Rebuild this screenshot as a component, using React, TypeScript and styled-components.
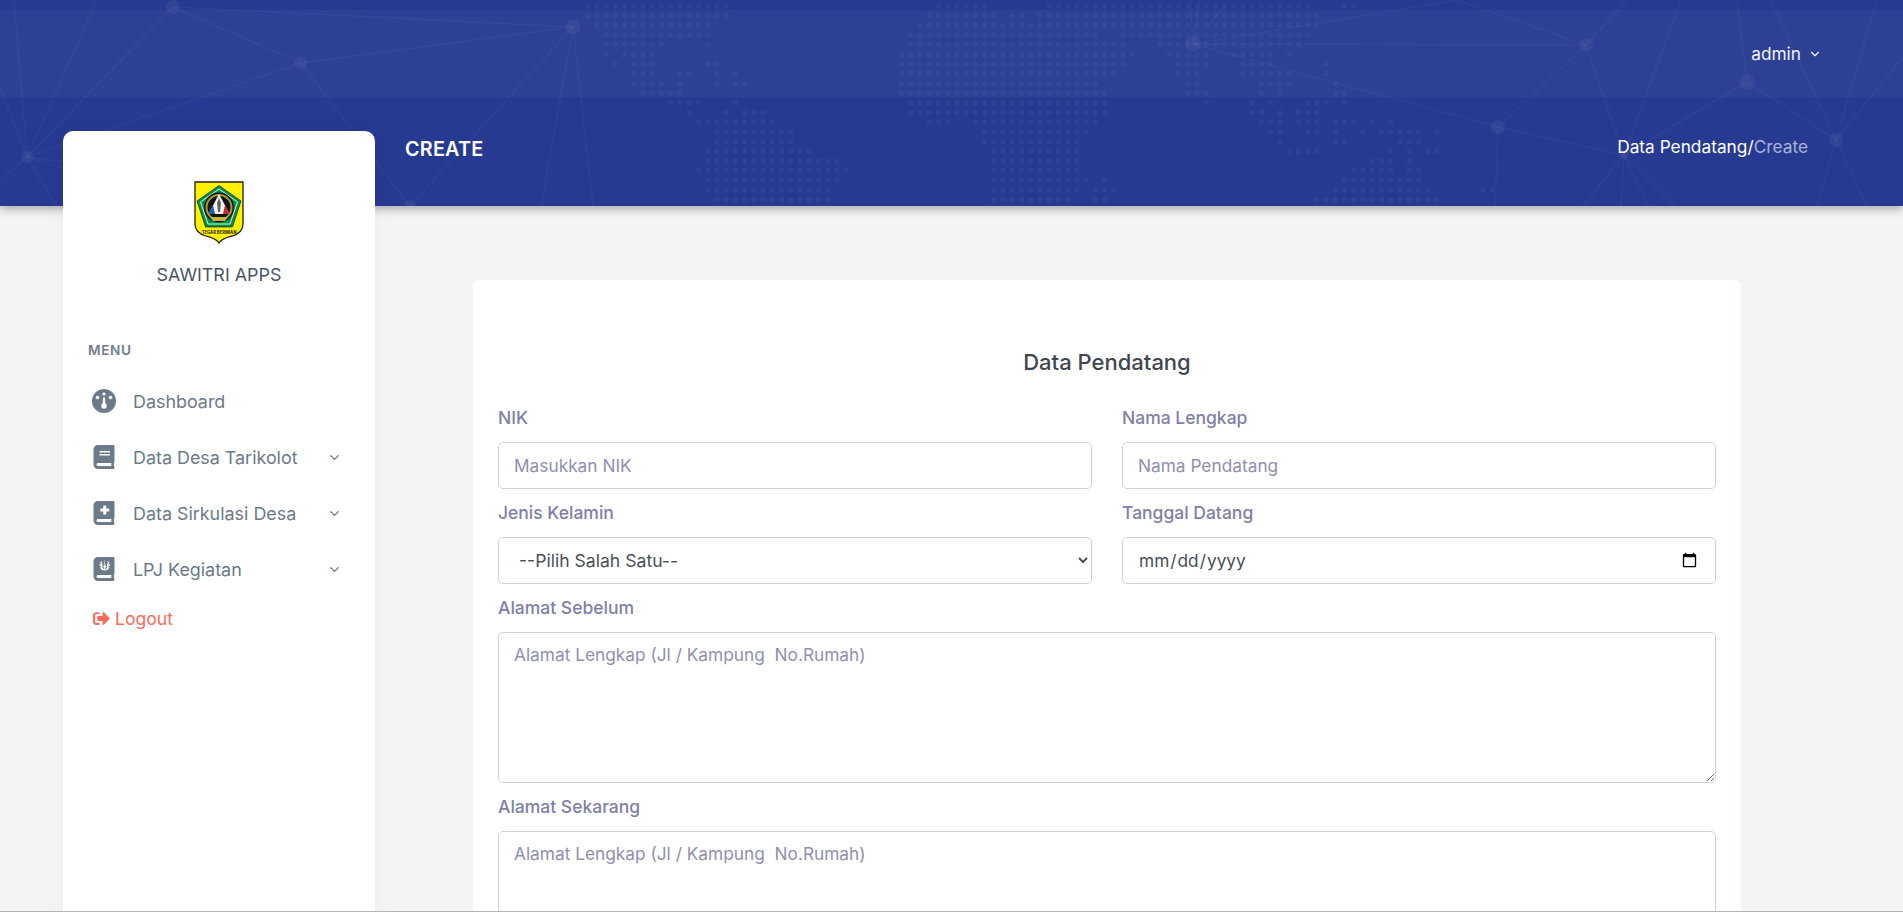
import React from "react";
import styled, { createGlobalStyle } from "styled-components";
import { FaBook, FaBookMedical, FaJournalWhills, FaSignOutAlt } from "react-icons/fa";
import { ChevronDown } from "lucide-react";

const Global = createGlobalStyle`
  html, body { margin: 0; padding: 0; height: 100%; overflow: hidden; }
  body { background: #f3f4f6; font-family: Inter, "Liberation Sans", sans-serif; }
  * { box-sizing: border-box; }
`;

const DOT_ROWS: string[] = [
  "0-15,38-43,50-78,82-83",
  "0-15,37-44,46-47,49-79",
  "1-13,36-79",
  "2-13,35-55,58-78",
  "2-8,13,35-58,62-77",
  "2,4-7,34-59,63-67,70-74,76",
  "3,5-7,13-14,34-58,64-67,71-74,80",
  "5-7,10-11,14,16,34-57,64-66,71-76,80",
  "5-8,10,14,16-17,34-55,65-66,73-76,81",
  "6-10,34-56,65-67,73,75,81-82",
  "9-12,16,35-56,67,72,74,78-80,82",
  "11,15,17-19,35-56,72-73,75,77-79",
  "12-20,37-39,42-55,73-75,77-79,81-83,85,87",
  "14-22,43-54,74-75,78-79,81,84,86-90,92",
  "14-22,43-53,75,81-82,88-90",
  "13-24,44-53,76-79,87,89,91-92",
  "13-27,44-53,85-87,89",
  "12-28,44-53,83-87,89-90",
  "13-27,44-54,56,82-90",
  "13-26,44-53,55-57,81-91,97-98",
  "14-26,44-52,55-56,79-92",
];

const dots: [number, number][] = [];
DOT_ROWS.forEach((row, r) => {
  row.split(",").forEach((part) => {
    const [a, b] = part.split("-").map(Number);
    for (let c = a; c <= (b ?? a); c++) dots.push([587.67 + c * 9.23, 6 + r * 9.68]);
  });
});

const LINES: [number, number, number, number][] = [
  [173, 7, 573, 27], [173, 7, 301, 63], [301, 63, 573, 27], [173, 7, 27, 157], [27, 157, 301, 63],
  [97, 0, 27, 157], [14, 0, 27, 157], [0, 87, 27, 157], [0, 180, 27, 157], [56, 206, 27, 157],
  [27, 157, 70, 163], [27, 157, 70, 170], [301, 63, 410, 206], [573, 27, 410, 206], [573, 27, 593, 206],
  [573, 27, 541, 206], [1190, 0, 1193, 44], [1200, 0, 1193, 44], [1230, 0, 1193, 44],
  [1193, 44, 1457, 0], [1193, 44, 1586, 45], [1193, 44, 1498, 127], [1457, 0, 1586, 45],
  [1627, 0, 1586, 45], [1586, 45, 1498, 127], [1586, 45, 1624, 155], [1498, 127, 1624, 155],
  [1498, 127, 1495, 206], [1624, 155, 1583, 206], [1624, 155, 1621, 206], [1624, 155, 1648, 206],
  [1624, 155, 1675, 206], [1624, 155, 1681, 0], [1624, 155, 1747, 82], [1747, 82, 1836, 140],
  [1737, 0, 1747, 82], [1836, 140, 1771, 0], [1836, 140, 1877, 0], [1836, 140, 1903, 57],
  [1836, 140, 1817, 206], [1836, 140, 1867, 206],
];

const NODES: [number, number, number][] = [
  [173, 7, 7], [301, 63, 6.5], [573, 27, 7.5], [27, 157, 6], [410, 206, 6], [1193, 44, 8],
  [1586, 45, 7], [1498, 127, 7], [1624, 155, 5], [1747, 82, 7.5], [1836, 140, 7],
];

const Page = styled.div`
  height: 100vh;
  overflow: hidden;
  border-bottom: 1px solid #b4b4b4;
  color: #3c4858;
`;

const Header = styled.header`
  position: relative;
  height: 206px;
  background: #273a91;
  box-shadow: 0 3px 9px rgba(0, 0, 0, 0.32);
  color: #fff;
`;

const HeaderArt = styled.svg`
  position: absolute;
  inset: 0;
  width: 100%;
  height: 100%;
`;

const TopBand = styled.div`
  position: relative;
  top: 10px;
  height: 88px;
  background: rgba(255, 255, 255, 0.03);
  border-bottom: 1px solid rgba(0, 0, 0, 0.03);
  display: flex;
  align-items: center;
  justify-content: flex-end;
  padding: 0 81px 0 0;
`;

const UserMenu = styled.div`
  display: flex;
  align-items: center;
  gap: 7px;
  font-size: 17.3px;
  color: #f0f2fa;
`;

const TitleRow = styled.div`
  position: relative;
  margin-top: 10px;
  height: 108px;
  display: flex;
  align-items: flex-start;
  justify-content: space-between;
  padding: 37px 95px 0 405px;
`;

const PageTitle = styled.h1`
  margin: 2px 0 0;
  font-size: 19.8px;
  line-height: 24px;
  font-weight: 600;
  letter-spacing: 0.2px;
`;

const Crumbs = styled.div`
  font-size: 17.3px;
  line-height: 24px;
  color: #fff;
`;

const CrumbMuted = styled.span`
  color: #aab2d6;
`;

const Body = styled.div`
  position: relative;
  display: flex;
  align-items: flex-start;
  margin-top: -75px;
  padding-left: 63px;
`;

const Sidebar = styled.aside`
  width: 312px;
  height: 900px;
  flex: none;
  background: #fff;
  border-radius: 10px 10px 0 0;
  box-shadow: 0 0 24px rgba(0, 0, 0, 0.03);
  padding-top: 50px;
`;

const Brand = styled.div`
  display: flex;
  flex-direction: column;
  align-items: center;
`;

const LogoSvg = styled.svg`
  display: block;
  width: 50px;
  height: 63px;
`;

const BrandName = styled.div`
  margin-top: 20px;
  font-size: 17.9px;
  line-height: 22px;
  color: #4a5564;
`;

const MenuHeading = styled.div`
  margin: 54px 0 0 25px;
  font-size: 13.6px;
  line-height: 20px;
  font-weight: 600;
  letter-spacing: 0.6px;
  color: #6f7d8f;
`;

const MenuList = styled.nav`
  margin-top: 13px;
  display: flex;
  flex-direction: column;
`;

const MenuItem = styled.a`
  height: 56px;
  display: grid;
  grid-template-columns: 24px 1fr 16px;
  align-items: center;
  column-gap: 17px;
  padding: 0 32px 0 29px;
  color: #6c7a89;
  font-size: 17.9px;
`;

const MenuIcon = styled.span`
  display: flex;
  color: #6c7a89;
  svg {
    width: auto;
    height: 24px;
  }
`;

const MenuChevron = styled.span`
  display: flex;
  color: #667388;
`;

const LogoutLink = styled.a`
  display: flex;
  align-items: center;
  gap: 5px;
  height: 24px;
  margin: 9px 0 0 30px;
  color: #fb6b5b;
  font-size: 17.6px;
`;

const Main = styled.main`
  width: 1268px;
  margin: 149px 0 0 98px;
  background: #fff;
  border-radius: 6px;
  padding: 64px 25px 40px;
`;

const FormTitle = styled.h2`
  margin: 0 0 26px;
  text-align: center;
  font-size: 22px;
  line-height: 36px;
  font-weight: 500;
  color: #3f4650;
`;

const FormGrid = styled.div`
  display: grid;
  grid-template-columns: 1fr 1fr;
  column-gap: 30px;
`;

const Field = styled.div<{ $wide?: boolean }>`
  grid-column: ${(p) => (p.$wide ? "1 / -1" : "auto")};
  margin-bottom: 12px;
`;

const Label = styled.label`
  display: block;
  margin-bottom: 12px;
  font-size: 17.5px;
  line-height: 24px;
  font-weight: 500;
  color: #8080a6;
`;

const controlCss = `
  display: block;
  width: 100%;
  background: #fff;
  border: 1px solid #ced2d9;
  border-radius: 5px;
  font-family: Inter, "Liberation Sans", sans-serif;
  font-size: 17.3px;
  color: #495057;
  outline: none;
  &::placeholder { color: #8f8fae; opacity: 1; }
`;

const TextInput = styled.input`
  ${controlCss}
  height: 47px;
  padding: 0 15px;
`;

const SelectInput = styled.select`
  ${controlCss}
  height: 47px;
  padding: 0 16px;
  font-size: 17.6px;
`;

const TextArea = styled.textarea`
  ${controlCss}
  height: 151px;
  padding: 11px 15px;
`;

function Logo() {
  return (
    <LogoSvg viewBox="0 0 50 63" aria-hidden="true">
      <path d="M1 1H49V43C49 49 45 53 38 55C33 56.500 28 57.500 25 62C22 57.500 17 56.500 12 55C5 53 1 49 1 43Z" fill="#fff200" stroke="#231f20" strokeWidth="1.300" />
      <path d="M25 4.500L47 20L38.500 46H11.500L3 20Z" fill="#00944a" stroke="#231f20" strokeWidth="0.700" />
      <path d="M25 8L43.500 21L36 43H14L6.500 21Z" fill="none" stroke="#e8e8e8" strokeWidth="1" />
      <circle cx="25" cy="26.500" r="15" fill="#14120f" />
      <circle cx="25" cy="26.500" r="12.500" fill="none" stroke="#a99a3a" strokeWidth="2" />
      <path d="M25 13L35.500 33H14.500Z" fill="#f4f4f4" />
      <path d="M19 24L14.500 33H21Z" fill="#1f5fb0" />
      <path d="M31 24L35.500 33H29Z" fill="#c8282e" />
      <path d="M25 17L27 22L26 31H24L23 22Z" fill="#23201c" opacity="0.700" />
      <path d="M16 36H34L31 40H19Z" fill="#c9b43a" />
      <text x="25" y="53" textAnchor="middle" fontSize="4.200" fontWeight="700" fontFamily="Inter, sans-serif" fill="#231f20">TEGAR BERIMAN</text>
    </LogoSvg>
  );
}

function GaugeIcon({ size }: { size: number }) {
  return (
    <svg viewBox="0 0 24 24" width={size} height={size} aria-hidden="true">
      <circle cx="12" cy="12" r="12" fill="currentColor" />
      <circle cx="12" cy="5" r="1.600" fill="#fff" />
      <circle cx="5.500" cy="8.500" r="1.800" fill="#fff" />
      <circle cx="18.500" cy="8.500" r="1.800" fill="#fff" />
      <path d="M11 8.500H13L13.300 15H10.700Z" fill="#fff" />
      <circle cx="12" cy="17" r="2.800" fill="#fff" />
    </svg>
  );
}

const MENU = [
  { label: "Dashboard", Icon: GaugeIcon, more: false },
  { label: "Data Desa Tarikolot", Icon: FaBook, more: true },
  { label: "Data Sirkulasi Desa", Icon: FaBookMedical, more: true },
  { label: "LPJ Kegiatan", Icon: FaJournalWhills, more: true },
];

export default function App() {
  return (
    <Page>
      <Global />
      <Header>
        <HeaderArt viewBox="0 0 1903 206" preserveAspectRatio="none" aria-hidden="true">
          <g fill="#fff" fillOpacity="0.04">
            {dots.map(([x, y], i) => (
              <circle key={i} cx={x} cy={y} r="2.700" />
            ))}
          </g>
          <g stroke="#fff" strokeOpacity="0.035" strokeWidth="1.500">
            {LINES.map(([a, b, c, d], i) => (
              <line key={i} x1={a} y1={b} x2={c} y2={d} />
            ))}
          </g>
          <g fill="#fff" fillOpacity="0.05">
            {NODES.map(([x, y, r], i) => (
              <circle key={i} cx={x} cy={y} r={r} />
            ))}
          </g>
        </HeaderArt>
        <TopBand>
          <UserMenu>
            admin
            <ChevronDown size={14} strokeWidth={2} />
          </UserMenu>
        </TopBand>
        <TitleRow>
          <PageTitle>CREATE</PageTitle>
          <Crumbs>
            Data Pendatang/<CrumbMuted>Create</CrumbMuted>
          </Crumbs>
        </TitleRow>
      </Header>
      <Body>
        <Sidebar>
          <Brand>
            <Logo />
            <BrandName>SAWITRI APPS</BrandName>
          </Brand>
          <MenuHeading>MENU</MenuHeading>
          <MenuList>
            {MENU.map(({ label, Icon, more }) => (
              <MenuItem key={label}>
                <MenuIcon>
                  <Icon size={24} />
                </MenuIcon>
                {label}
                {more ? (
                  <MenuChevron>
                    <ChevronDown size={15} strokeWidth={2} />
                  </MenuChevron>
                ) : (
                  <span />
                )}
              </MenuItem>
            ))}
          </MenuList>
          <LogoutLink>
            <FaSignOutAlt size={17} />
            Logout
          </LogoutLink>
        </Sidebar>
        <Main>
          <FormTitle>Data Pendatang</FormTitle>
          <FormGrid>
            <Field>
              <Label>NIK</Label>
              <TextInput placeholder="Masukkan NIK" />
            </Field>
            <Field>
              <Label>Nama Lengkap</Label>
              <TextInput placeholder="Nama Pendatang" />
            </Field>
            <Field>
              <Label>Jenis Kelamin</Label>
              <SelectInput defaultValue="">
                <option value="">--Pilih Salah Satu--</option>
                <option value="L">Laki-laki</option>
                <option value="P">Perempuan</option>
              </SelectInput>
            </Field>
            <Field>
              <Label>Tanggal Datang</Label>
              <TextInput type="date" />
            </Field>
            <Field $wide>
              <Label>Alamat Sebelum</Label>
              <TextArea placeholder="Alamat Lengkap (Jl / Kampung  No.Rumah)" />
            </Field>
            <Field $wide>
              <Label>Alamat Sekarang</Label>
              <TextArea placeholder="Alamat Lengkap (Jl / Kampung  No.Rumah)" />
            </Field>
          </FormGrid>
        </Main>
      </Body>
    </Page>
  );
}
